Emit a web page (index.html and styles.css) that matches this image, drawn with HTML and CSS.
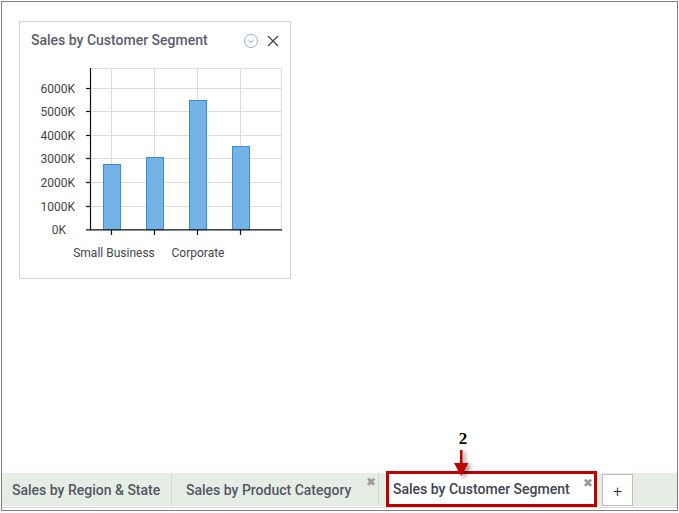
FILE: index.html
```html
<!DOCTYPE html>
<html>
<head>
<meta charset="utf-8">
<link rel="stylesheet" href="styles.css">
</head>
<body>
<div class="frame">
  <div class="canvas">
    <div class="card">
      <div class="card-head">
        <span class="card-title">Sales by Customer Segment</span>
        <span class="card-icons">
          <svg class="ico-chev" width="16" height="16" viewBox="0 0 16 16"><circle cx="8" cy="8" r="6.5" fill="none" stroke="#8fb4d6" stroke-width="1"/><path d="M5.3 6.8 L8 9.4 L10.7 6.8" fill="none" stroke="#8a9bb0" stroke-width="1"/></svg>
          <svg class="ico-x" width="12" height="12" viewBox="0 0 12 12"><path d="M1 1 L11 11 M11 1 L1 11" stroke="#444" stroke-width="1.3"/></svg>
        </span>
      </div>
      <svg class="chart" width="270" height="229" viewBox="20 49 270 229">
        <g stroke="#dcdcdc" stroke-width="1">
          <line x1="90" y1="68.5" x2="282" y2="68.5"/>
          <line x1="90" y1="88.5" x2="282" y2="88.5"/>
          <line x1="90" y1="111.5" x2="282" y2="111.5"/>
          <line x1="90" y1="135.5" x2="282" y2="135.5"/>
          <line x1="90" y1="158.5" x2="282" y2="158.5"/>
          <line x1="90" y1="182.5" x2="282" y2="182.5"/>
          <line x1="90" y1="206.5" x2="282" y2="206.5"/>
          <line x1="111.5" y1="68" x2="111.5" y2="230"/>
          <line x1="154.5" y1="68" x2="154.5" y2="230"/>
          <line x1="197.5" y1="68" x2="197.5" y2="230"/>
          <line x1="240.5" y1="68" x2="240.5" y2="230"/>
          <line x1="281.5" y1="68" x2="281.5" y2="230"/>
        </g>
        <g fill="#74b3e6" stroke="#3a8cd6" stroke-width="1">
          <rect x="103.5" y="164.5" width="17" height="65"/>
          <rect x="146.5" y="157.5" width="17" height="72"/>
          <rect x="189.5" y="100.5" width="17" height="129"/>
          <rect x="232.5" y="146.5" width="17" height="83"/>
        </g>
        <g stroke="#111" stroke-width="1.2">
          <line x1="90.5" y1="68" x2="90.5" y2="230"/>
          <line x1="86" y1="229.8" x2="282" y2="229.8"/>
          <line x1="86" y1="88.5" x2="90" y2="88.5"/>
          <line x1="86" y1="111.5" x2="90" y2="111.5"/>
          <line x1="86" y1="135.5" x2="90" y2="135.5"/>
          <line x1="86" y1="158.5" x2="90" y2="158.5"/>
          <line x1="86" y1="182.5" x2="90" y2="182.5"/>
          <line x1="86" y1="206.5" x2="90" y2="206.5"/>
          <line x1="111.5" y1="230" x2="111.5" y2="235"/>
          <line x1="154.5" y1="230" x2="154.5" y2="235"/>
          <line x1="197.5" y1="230" x2="197.5" y2="235"/>
          <line x1="240.5" y1="230" x2="240.5" y2="235"/>
        </g>
        <g class="ylab" text-anchor="end">
          <text x="75" y="92.5">6000K</text>
          <text x="75" y="115.5">5000K</text>
          <text x="75" y="139.5">4000K</text>
          <text x="75" y="162.5">3000K</text>
          <text x="75" y="186.5">2000K</text>
          <text x="75" y="210.5">1000K</text>
          <text x="66" y="234">0K</text>
        </g>
        <g class="xlab" text-anchor="middle">
          <text x="114" y="257">Small Business</text>
          <text x="198" y="257">Corporate</text>
        </g>
      </svg>
    </div>
  </div>
  <div class="tabbar">
    <div class="tab tab-first">Sales by Region &amp; State</div>
    <div class="tab tab-second">Sales by Product Category<span class="tab-close">✖</span></div>
    <div class="tab tab-active">Sales by Customer Segment<span class="tab-close">✖</span></div>
    <div class="tab-add">+</div>
  </div>
  <div class="tabline"></div>
  <div class="callout">
    <span class="callout-num">2</span>
    <svg class="callout-arrow" width="30" height="36" viewBox="0 0 30 36">
      <defs><filter id="sh" x="-50%" y="-50%" width="200%" height="200%"><feDropShadow dx="3" dy="2" stdDeviation="2" flood-color="#000" flood-opacity="0.45"/></filter></defs>
      <g filter="url(#sh)">
        <rect x="12" y="1" width="2.5" height="14" fill="#c00000"/>
        <path d="M6 14 L20.5 14 L13.25 27 Z" fill="#c00000"/>
      </g>
    </svg>
  </div>
</div>
</body>
</html>
```

FILE: styles.css
```css
* { box-sizing: border-box; }
html, body { margin: 0; padding: 0; background: #fff; }
body { font-family: Roboto, "Liberation Sans", Arial, sans-serif; }

.frame {
  position: relative;
  margin: 1px 0 0 1px;
  width: 677px;
  height: 510px;
  border: 1px solid #7f7f7f;
  display: flex;
  flex-direction: column;
  background: #fff;
}

.canvas {
  flex: 1;
  padding: 19px 0 0 17px;
}

.card {
  width: 272px;
  height: 258px;
  border: 1px solid #d6d6d0;
  background: #fff;
  display: flex;
  flex-direction: column;
}

.card-head {
  display: flex;
  align-items: center;
  justify-content: space-between;
  padding: 8px 11px 0 11px;
  height: 27px;
  line-height: 18px;
}

.card-title {
  font-size: 14px;
  font-weight: 500;
  color: #5a5d6a;
}

.card-icons {
  display: flex;
  align-items: center;
  gap: 8px;
  margin-top: 3px;
}

.chart { display: block; }
.ylab text, .xlab text {
  font-family: Roboto, "Liberation Sans", Arial, sans-serif;
  font-size: 12px;
  fill: #444;
}

.tabbar {
  height: 33px;
  background: #e6ede5;
  display: flex;
  align-items: stretch;
}

.tab {
  position: relative;
  font-size: 14px;
  font-weight: 500;
  color: #535766;
  display: flex;
  align-items: center;
  white-space: nowrap;
}

.tab-first {
  width: 170px;
  padding-left: 10px;
  border-right: 1px solid #d3dad2;
}

.tab-second {
  width: 207px;
  padding-left: 14px;
  border-right: 1px solid #d3dad2;
}

.tab-active {
  margin-left: 7px;
  margin-top: -2px;
  width: 211px;
  height: 36px;
  padding-left: 4px;
  padding-bottom: 1px;
  background: #fff;
  border: 3px solid #c00000;
  color: #3f4352;
}

.tab-close {
  position: absolute;
  font-size: 12px;
  line-height: 12px;
  color: #9a9a9a;
}
.tab-second .tab-close { right: 2px; top: 3px; }
.tab-active .tab-close { right: 1px; top: 3px; }

.tab-add {
  margin-left: 5px;
  margin-top: 1px;
  width: 31px;
  height: 32px;
  background: #fff;
  border: 1px solid #bdbdbd;
  display: flex;
  align-items: center;
  justify-content: center;
  font-size: 16px;
  font-weight: 300;
  color: #222;
  padding-top: 3px;
}

.tabline {
  height: 2px;
  border-bottom: 1px solid #d8d8d8;
  margin-bottom: 2px;
}

.callout {
  position: absolute;
  left: 446px;
  top: 428px;
  width: 30px;
  display: flex;
  flex-direction: column;
  align-items: center;
}

.callout-num {
  font-family: "Liberation Serif", "Times New Roman", serif;
  font-weight: bold;
  font-size: 17px;
  line-height: 17px;
  color: #000;
}

.callout-arrow { display: block; margin-top: 2px; }
```
